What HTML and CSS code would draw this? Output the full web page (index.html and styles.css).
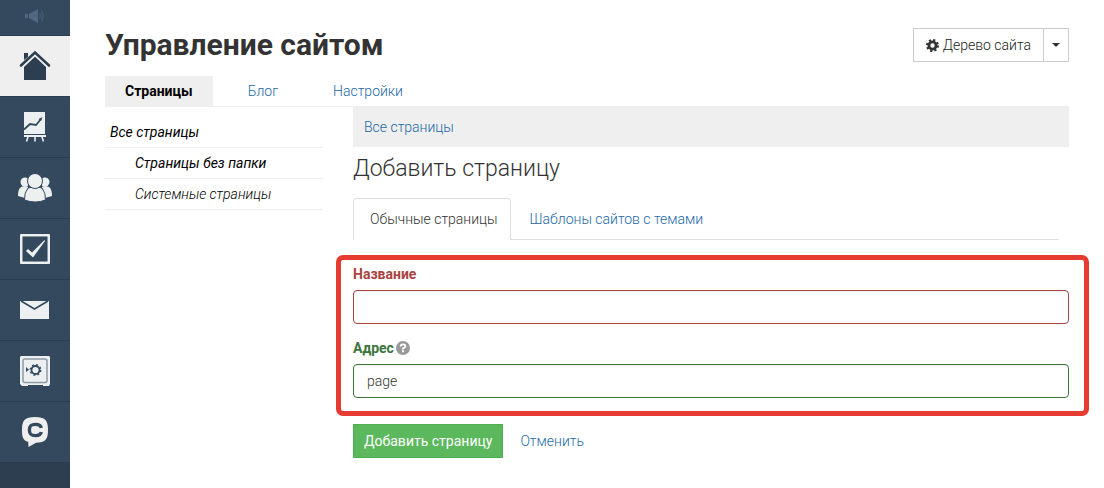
FILE: index.html
```html
<!DOCTYPE html>
<html lang="ru">
<head>
<meta charset="utf-8">
<meta name="viewport" content="width=device-width, initial-scale=1">
<title>Управление сайтом</title>
<link rel="stylesheet" href="styles.css">
</head>
<body>
<div class="app">
  <nav class="sidebar" aria-label="Разделы">
    <a class="side-link side-link-first" href="#" aria-label="Объявления">
      <svg width="22" height="16" viewBox="0 0 22 16" fill="#4f6881"><path d="M1 6h3v4H1zM5 6l9-5v14l-9-5z"/><path d="M15.500 5q2 3 0 6M17.500 3q3 5 0 10" fill="none" stroke="#435b74" stroke-width="1.500"/></svg>
    </a>
    <a class="side-link side-link-active" href="#" aria-label="Главная">
      <svg width="32" height="32" viewBox="0 0 32 32" fill="#2c3e50"><path d="M5 16 16 6l11 10v14H5z"/><path d="M5 3h4v4L5 10z"/><path d="M2 15.500 16 2.500l14 13" fill="none" stroke="#2c3e50" stroke-width="2.600" stroke-linecap="round"/><path d="M4 17 16 5.800 28 17" fill="none" stroke="#efefef" stroke-width="1.400"/></svg>
    </a>
    <a class="side-link" href="#" aria-label="Статистика">
      <svg width="24" height="32" viewBox="0 0 24 32" fill="#ecf0f1"><path d="M1 1h21v22H1z"/><path d="M1 24h22v2H1z"/><path d="M5 26 3.500 30.500M12 26v4.500M19 26l1.500 4.500" stroke="#ecf0f1" stroke-width="1.600"/><path d="M1 18.500 7 13l6 1L18 8" fill="none" stroke="#34495e" stroke-width="1.800"/><path d="m15.500 8 4-2-1.500 4z" fill="#34495e"/></svg>
    </a>
    <a class="side-link" href="#" aria-label="Пользователи">
      <svg width="34" height="30" viewBox="0 0 34 30" fill="#ecf0f1"><circle cx="7" cy="9" r="4.500"/><circle cx="27" cy="9" r="4.500"/><path d="M3 14q5-2 7 0l-3 11-7-2q0-7 3-9zM31 14q-5-2-7 0l3 11 7-2q0-7-3-9z"/><path d="M10 15q7-3 14 0 4 5 3.500 12-10 4-21 0Q6 20 10 15z" stroke="#34495e"/><circle cx="17" cy="8" r="7.500" stroke="#34495e"/></svg>
    </a>
    <a class="side-link" href="#" aria-label="Задачи">
      <svg width="30" height="30" viewBox="0 0 30 30"><rect width="30" height="30" rx="1" fill="#ecf0f1"/><rect x="2.500" y="2.500" width="25" height="25" rx="1" fill="#34495e" stroke="#8896a2"/><path d="m6 17 2-2 4 3.500L24.500 6 25 7 13 23.500z" fill="#ecf0f1"/></svg>
    </a>
    <a class="side-link" href="#" aria-label="Почта">
      <svg width="30" height="20" viewBox="0 0 30 20"><path d="M0 1h29v18H0z" fill="#ecf0f1"/><path d="m1 1 13.500 8L28 1" fill="none" stroke="#34495e" stroke-width="1.600"/></svg>
    </a>
    <a class="side-link" href="#" aria-label="Финансы">
      <svg width="30" height="30" viewBox="0 0 30 30"><path d="M1 0h28l1 1v27l-1 2h-6v-1H8v1H2l-2-2V1z" fill="#ecf0f1"/><rect x="3" y="3" width="24" height="23.500" rx="2" fill="none" stroke="#8d9ba6" stroke-width="1.500"/><circle cx="15.500" cy="14" r="4" fill="none" stroke="#34495e" stroke-width="1.800"/><circle cx="15.500" cy="14" r="5.300" fill="none" stroke="#34495e" stroke-width="1.300" stroke-dasharray="2 2.160"/><path d="m6 11 3 2.700L6 16z" fill="#34495e"/></svg>
    </a>
    <a class="side-link" href="#" aria-label="Чат">
      <svg width="28" height="32" viewBox="0 0 28 32"><path d="M14 1c10 0 13 3 13 13s-3 12.500-12 12.700L7.500 31l-.3-5.200C2 24.500 1 21 1 14 1 4 4 1 14 1z" fill="#efefef"/><path d="M20.200 12C19.800 9.200 18 8.400 14.500 8.400c-4.500 0-6.100 1.200-6.100 5.600s1.600 5.600 6.100 5.600c3.500 0 5.300-.8 5.700-3.600" fill="none" stroke="#34495e" stroke-width="3.400"/></svg>
    </a>
  </nav>

  <main class="main">
    <header class="header">
      <h1 class="title">Управление сайтом</h1>
      <div class="button-group">
        <button class="tool-button" type="button">
          <svg width="13" height="13" viewBox="0 0 13 13"><circle cx="6.500" cy="6.500" r="3.600" fill="none" stroke="#333" stroke-width="2.800"/><circle cx="6.500" cy="6.500" r="5.500" fill="none" stroke="#333" stroke-width="2" stroke-dasharray="2.160 2.160"/></svg>
          Дерево сайта
        </button>
        <button class="tool-button tool-toggle" type="button" aria-label="Открыть меню">
          <svg width="8" height="4" viewBox="0 0 8 4"><path d="M0 0h8L4 4z" fill="#333"/></svg>
        </button>
      </div>
    </header>

    <nav class="tabs" aria-label="Управление сайтом">
      <a class="tab tab-active" href="#">Страницы</a>
      <a class="tab" href="#">Блог</a>
      <a class="tab" href="#">Настройки</a>
    </nav>

    <div class="columns">
      <nav class="folders" aria-label="Папки">
        <a class="folder folder-current" href="#">Все страницы</a>
        <a class="folder folder-child folder-current" href="#">Страницы без папки</a>
        <a class="folder folder-child" href="#">Системные страницы</a>
      </nav>

      <section class="content">
        <div class="breadcrumb"><a href="#">Все страницы</a></div>
        <h2 class="subtitle">Добавить страницу</h2>
        <nav class="kinds" aria-label="Тип страницы">
          <a class="kind kind-active" href="#">Обычные страницы</a>
          <a class="kind" href="#">Шаблоны сайтов с темами</a>
        </nav>
        <form class="form">
          <div class="highlight">
            <div class="field field-error">
              <label class="label" for="name">Название</label>
              <input class="input" id="name" type="text">
            </div>
            <div class="field field-success">
              <div class="label-row">
                <label class="label" for="address">Адрес</label>
                <svg width="14" height="14" viewBox="0 0 14 14"><circle cx="7" cy="7" r="7" fill="#999"/><path d="M4.700 5.400Q4.700 3.300 7 3.300t2.300 1.900Q9.300 6.500 7 7.400v1" fill="none" stroke="#fff" stroke-width="1.800"/><path d="M6 9.300h2v2H6z" fill="#fff"/></svg>
              </div>
              <input class="input input-success" id="address" type="text" value="page">
            </div>
          </div>
          <div class="actions">
            <button class="submit" type="submit">Добавить страницу</button>
            <a href="#">Отменить</a>
          </div>
        </form>
      </section>
    </div>
  </main>
</div>
</body>
</html>
```
FILE: styles.css
```css
* {
  box-sizing: border-box;
}

body {
  margin: 0;
  background: #fff;
  color: #333;
  font-family: Roboto, "Liberation Sans", sans-serif;
  font-size: 14px;
  font-weight: 300;
  line-height: 20px;
}

a {
  color: #2268a8;
  text-decoration: none;
}

svg {
  display: block;
  flex: none;
}

.app {
  display: flex;
  min-height: 100vh;
}

.sidebar {
  flex: none;
  width: 70px;
  background: #2c3e50;
}

.side-link {
  display: flex;
  align-items: center;
  justify-content: center;
  height: 61px;
  border-bottom: 1px solid #2a3c4e;
  background: #34495e;
}

.side-link-first {
  height: 36px;
  padding-bottom: 3px;
}

.side-link-active {
  background: #efefef;
}

.main {
  flex: 1;
  min-width: 0;
  padding: 28px 35px 30px;
}

.header {
  display: flex;
  align-items: flex-start;
  justify-content: space-between;
  height: 48px;
}

.title {
  margin: 0;
  font-size: 30px;
  font-weight: 700;
  line-height: 34px;
}

.button-group {
  display: flex;
}

.tool-button {
  display: flex;
  align-items: center;
  gap: 4px;
  height: 34px;
  padding: 0 12px;
  border: 1px solid #ccc;
  background: #fff;
  color: #222;
  font: inherit;
}

.tool-toggle {
  margin-left: -1px;
  padding: 0 8px;
}

.tabs {
  display: flex;
  gap: 15px;
  border-bottom: 1px solid #eee;
}

.tab {
  padding: 5px 20px;
  line-height: 20px;
}

.tab-active {
  background: #efefef;
  color: #000;
  font-weight: 700;
}

.columns {
  display: flex;
  gap: 30px;
}

.folders {
  flex: none;
  width: 218px;
  padding-top: 10px;
}

.folder {
  display: block;
  padding: 5px;
  border-bottom: 1px solid #eee;
  color: #000;
  font-style: italic;
}

.folder-current {
  font-weight: 400;
}

.folder-child {
  padding-left: 30px;
}

.content {
  flex: 1;
  min-width: 0;
}

.breadcrumb {
  padding: 10px 11px;
  background: #efefef;
}

.subtitle {
  margin: 8px 0 15px;
  font-size: 23px;
  font-weight: 300;
  line-height: 28px;
}

.kinds {
  display: flex;
  gap: 2px;
  margin-right: 10px;
  border-bottom: 1px solid #ddd;
}

.kind {
  padding: 10px 12px 9px 16px;
  border: 1px solid transparent;
  line-height: 20px;
}

.kind-active {
  margin-bottom: -1px;
  border-color: #ddd #ddd #fff;
  border-radius: 4px 4px 0 0;
  background: #fff;
  color: #333;
}

.highlight {
  display: grid;
  gap: 14px;
  margin: 15px -20px 8px -17px;
  padding: 4px 15px 13px 12px;
  border: 5px solid #e53b30;
  border-radius: 7px;
}

.field {
  display: grid;
  gap: 6px;
}

.label-row {
  display: flex;
  align-items: center;
  gap: 2px;
}

.label {
  font-weight: 700;
  line-height: 20px;
}

.field-error {
  color: #a94442;
}

.field-success {
  color: #3c763d;
}

.input {
  width: 100%;
  height: 34px;
  padding: 6px 13px;
  border: 1px solid currentColor;
  border-radius: 4px;
  background: #fff;
  box-shadow: inset 0 1px 1px #0001;
  color: inherit;
  font: inherit;
}

.input-success {
  border-color: #3c763d;
  color: #333;
}

.actions {
  display: flex;
  align-items: center;
  gap: 17px;
}

.submit {
  height: 34px;
  padding: 0 10px;
  border: 1px solid #4cae4c;
  background: #5cb85c;
  color: #fff;
  font: inherit;
  font-weight: 400;
}
```
